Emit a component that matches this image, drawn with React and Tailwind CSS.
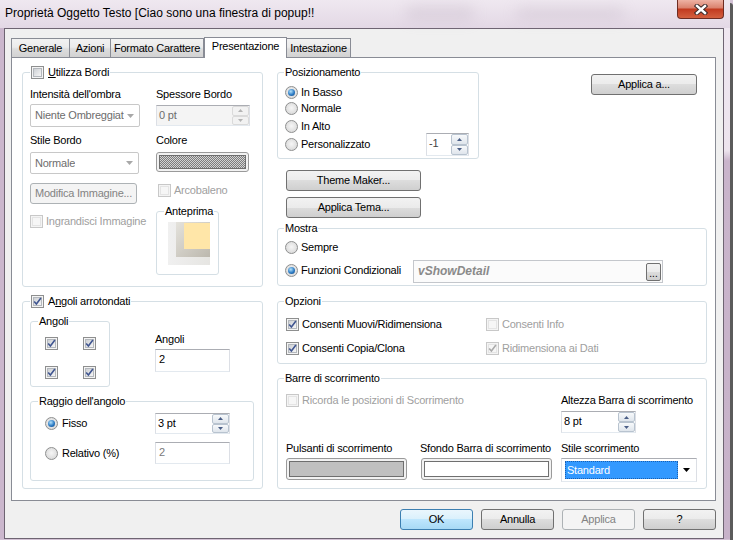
import React from 'react';

function Check({ checked = false, disabled = false }) {
  return (
    <span
      className={`relative flex h-[13px] w-[13px] shrink-0 items-center justify-center border ${
        disabled ? 'border-[#c8c8c8] bg-[#f4f4f4]' : 'border-[#8e8f8f] bg-[#f4f4f4]'
      }`}
    >
      <span
        className={`h-[9px] w-[9px] border ${
          disabled
            ? 'border-[#e4e4e4] bg-[#f6f6f6]'
            : 'border-[#b4b8bd] bg-[linear-gradient(135deg,#cdd0d4,#f6f6f6)]'
        }`}
      />
      {checked && (
        <svg className="absolute inset-0" width="11" height="11" viewBox="0 0 11 11">
          <path
            d="M2.2 5.4 L4.4 8 L8.9 2"
            fill="none"
            stroke={disabled ? '#aaaaaa' : '#3f5590'}
            strokeWidth="1.6"
          />
        </svg>
      )}
    </span>
  );
}

function Radio({ checked = false }) {
  return (
    <span className="flex h-[13px] w-[13px] shrink-0 items-center justify-center rounded-full border border-[#8e8f8f] bg-[radial-gradient(circle_at_50%_45%,#f6f6f6,#d2d2d2)]">
      {checked && (
        <span className="h-[7px] w-[7px] rounded-full bg-[radial-gradient(circle_at_40%_35%,#b4e2fb,#2c7bc4_55%,#13427a)]" />
      )}
    </span>
  );
}

function Button({ children, className = '', variant = 'normal' }) {
  const look =
    variant === 'primary'
      ? 'border-[#3c7fb1] bg-[linear-gradient(#eaf6fd,#d9f0fc_50%,#bee6fd_50%,#a7d9f5)]'
      : variant === 'disabled'
      ? 'border-[#adb2b5] bg-[#f4f4f4] text-[#838383]'
      : 'border-[#707070] bg-[linear-gradient(#f2f2f2,#ebebeb_50%,#dddddd_50%,#cfcfcf)]';
  return (
    <div className={`flex h-[21px] shrink-0 items-center justify-center rounded-[3px] border ${look} ${className}`}>
      {children}
    </div>
  );
}

function SpinButtons({ disabled = false }) {
  const c = disabled ? '#b4b4b4' : '#4a5e86';
  const part = disabled
    ? 'border-[#dadada] bg-[#f2f2f2]'
    : 'border-[#b8c3cf] bg-[linear-gradient(#f7f9fb,#dfe5ec)]';
  return (
    <div className="flex w-[17px] shrink-0 flex-col">
      <div className={`flex flex-1 items-center justify-center rounded-[2px] border ${part}`}>
        <svg width="5" height="3" viewBox="0 0 5 3">
          <path d="M0 3 L2.5 0 L5 3Z" fill={c} />
        </svg>
      </div>
      <div className={`flex flex-1 items-center justify-center rounded-[2px] border ${part}`}>
        <svg width="5" height="3" viewBox="0 0 5 3">
          <path d="M0 0 L5 0 L2.5 3Z" fill={c} />
        </svg>
      </div>
    </div>
  );
}

function SpinBox({ value, className = '', disabled = false }) {
  return (
    <div
      className={`flex shrink-0 border border-[#abadb3] border-x-[#dcdfe5] border-b-[#e3e9ef] ${
        disabled ? 'bg-[#f4f4f4] text-[#6d6d6d]' : 'bg-white'
      } ${className}`}
    >
      <span className="flex-1 pl-[2px] pt-[3px]">{value}</span>
      <SpinButtons disabled={disabled} />
    </div>
  );
}

function TextBox({ value, className = '', muted = false }) {
  return (
    <div
      className={`shrink-0 border border-[#abadb3] border-x-[#dcdfe5] border-b-[#e3e9ef] bg-white pl-[3px] pt-[3px] ${
        muted ? 'text-[#7a7a7a]' : ''
      } ${className}`}
    >
      {value}
    </div>
  );
}

function Combo({ value, className = '' }) {
  return (
    <div
      className={`flex shrink-0 items-center justify-between gap-[3px] rounded-[2px] border border-[#c8c8c8] bg-white pl-[4px] pr-[5px] text-[#6d6d6d] ${className}`}
    >
      <span className="overflow-hidden whitespace-nowrap">{value}</span>
      <svg className="shrink-0" width="7" height="4" viewBox="0 0 7 4">
        <path d="M0 0 L7 0 L3.5 4Z" fill="#a8a8a8" />
      </svg>
    </div>
  );
}

function Group({ legend, className = '', legendClass = 'ml-[6px]', children }) {
  return (
    <fieldset className={`shrink-0 rounded-[3px] border border-[#d5dfe5] ${className}`}>
      <legend className={`px-[1px] leading-[13px] ${legendClass}`}>{legend}</legend>
      {children}
    </fieldset>
  );
}

function Swatch({ className = '', fill }) {
  return (
    <div className={`shrink-0 rounded-[3px] border border-[#9a9a9a] bg-[#f2f2f2] p-[2px] ${className}`}>
      <div className={`h-full border border-[#6f6f6f] ${fill}`} />
    </div>
  );
}

function Labeled({ children, gray = false, gap = 'gap-[3px]' }) {
  return (
    <div className={`flex items-center ${gap} whitespace-nowrap ${gray ? 'text-[#a0a0a0]' : ''}`}>{children}</div>
  );
}

const tabs = [
  { label: 'Generale', w: 'w-[58px]', b: 'border-l border-t' },
  { label: 'Azioni', w: 'w-[41px]', b: 'border-l border-t' },
  { label: 'Formato Carattere', w: 'w-[94px]', b: 'border-x border-t' },
  { label: 'Presentazione', w: 'w-[83px]', active: true },
  { label: 'Intestazione', w: 'w-[64px]', b: 'border-r border-t' },
];

function CloseButton() {
  return (
    <div className="mr-[6px] flex h-[19px] w-[47px] shrink-0 items-center justify-center rounded-b-[4px] border border-t-0 border-[#6e2c22] bg-[linear-gradient(#eeb2a4,#db8470_42%,#c23b20_52%,#d4603f)]">
      <svg width="14" height="11" viewBox="0 0 14 11">
        <path d="M3 2 L11 9 M11 2 L3 9" stroke="#3b2a2a" strokeWidth="4.4" strokeLinecap="square" />
        <path d="M3 2 L11 9 M11 2 L3 9" stroke="#ffffff" strokeWidth="2.4" strokeLinecap="square" />
      </svg>
    </div>
  );
}

function LeftColumn() {
  return (
    <div className="flex w-[241px] shrink-0 flex-col">
      {/* Utilizza Bordi */}
      <Group
        className="h-[221px]"
        legendClass="ml-[7px]"
        legend={
          <span className="flex items-center gap-[4px]">
            <Check />
            <span>
              <span className="underline">U</span>tilizza Bordi
            </span>
          </span>
        }
      >
        <div className="flex gap-[16px] pl-[7px] pt-[9px]">
          <div className="flex w-[110px] flex-col">
            <div className="whitespace-nowrap">Intensità dell'ombra</div>
            <Combo value="Niente Ombreggiat" className="mt-[3px] h-[23px] w-[110px]" />
            <div className="mt-[7px]">Stile Bordo</div>
            <Combo value="Normale" className="mt-[5px] h-[22px] w-[109px]" />
            <Button variant="disabled" className="mt-[9px] h-[20px] w-[107px]">
              Modifica Immagine...
            </Button>
            <div className="mt-[11px]">
              <Labeled gray>
                <Check disabled />
                Ingrandisci Immagine
              </Labeled>
            </div>
          </div>
          <div className="flex w-[94px] flex-col">
            <div className="whitespace-nowrap">Spessore Bordo</div>
            <SpinBox value="0 pt" disabled className="mt-[4px] h-[21px] w-[94px]" />
            <div className="mt-[8px]">Colore</div>
            <Swatch
              className="mt-[5px] h-[20px] w-[93px]"
              fill="bg-[repeating-conic-gradient(#7d7d7d_0%_25%,#d4d4d4_0%_50%)] bg-size-[2px_2px]"
            />
            <div className="mt-[12px] pl-[2px]">
              <Labeled gray>
                <Check disabled />
                Arcobaleno
              </Labeled>
            </div>
            <Group className="mt-[8px] h-[70px] w-[63px]" legendClass="ml-[7px]" legend="Anteprima">
              <div className="pl-[11px] pt-[4px]">
                <div className="flex h-[43px] w-[42px] flex-col bg-[linear-gradient(90deg,#f0f0f0,#e6e5e2)]">
                  <div className="flex">
                    <div className="w-[8px]" />
                    <div className="flex h-[35px] w-[34px] items-start justify-end bg-[linear-gradient(135deg,#e4e2dc,#bcb8ae)] pt-[1px]">
                      <div className="h-[26px] w-[26px] bg-[#ffe6a8]" />
                    </div>
                  </div>
                </div>
              </div>
            </Group>
          </div>
        </div>
      </Group>

      {/* Angoli arrotondati */}
      <Group
        className="mt-[8px] h-[194px]"
        legendClass="ml-[7px]"
        legend={
          <span className="flex items-center gap-[4px]">
            <Check checked />
            <span>
              A<span className="underline">n</span>goli arrotondati
            </span>
          </span>
        }
      >
        <div className="flex pl-[7px] pt-[7px]">
          <Group className="h-[72px] w-[80px]" legendClass="ml-[7px]" legend="Angoli">
            <div className="grid w-max grid-cols-2 gap-x-[25px] gap-y-[16px] pl-[14px] pt-[9px]">
              <Check checked />
              <Check checked />
              <Check checked />
              <Check checked />
            </div>
          </Group>
          <div className="ml-[45px] flex flex-col pt-[18px]">
            <div>Angoli</div>
            <TextBox value="2" className="mt-[3px] h-[23px] w-[75px]" />
          </div>
        </div>
        <Group className="ml-[7px] mt-[8px] h-[86px] w-[224px]" legendClass="ml-[7px]" legend="Raggio dell'angolo">
          <div className="flex flex-col pl-[14px] pt-[5px]">
            <div className="flex h-[21px] items-center">
              <div className="w-[110px]">
                <Labeled gap="gap-[4px]">
                  <Radio checked />
                  Fisso
                </Labeled>
              </div>
              <SpinBox value="3 pt" className="h-[21px] w-[75px]" />
            </div>
            <div className="mt-[8px] flex h-[22px] items-center">
              <div className="w-[110px]">
                <Labeled gap="gap-[4px]">
                  <Radio />
                  Relativo (%)
                </Labeled>
              </div>
              <TextBox value="2" muted className="h-[22px] w-[75px]" />
            </div>
          </div>
        </Group>
      </Group>
    </div>
  );
}

function RightColumn() {
  return (
    <div className="ml-[14px] flex w-[430px] shrink-0 flex-col">
      <div className="flex items-start">
        <Group className="h-[93px] w-[202px]" legend="Posizionamento">
          <div className="flex flex-col pl-[7px] pr-[9px] pt-[7px]">
            <Labeled>
              <Radio checked />
              In Basso
            </Labeled>
            <div className="mt-[3px]">
              <Labeled>
                <Radio />
                Normale
              </Labeled>
            </div>
            <div className="mt-[5px]">
              <Labeled>
                <Radio />
                In Alto
              </Labeled>
            </div>
            <div className="mt-[5px] flex h-[13px] items-center justify-between">
              <Labeled>
                <Radio />
                Personalizzato
              </Labeled>
              <SpinBox value="-1" className="h-[23px] w-[43px] text-[#444]" />
            </div>
          </div>
        </Group>
        <Button className="ml-[112px] mt-[8px] w-[106px]">Applica a...</Button>
      </div>

      <Button className="ml-[9px] mt-[11px] w-[135px]">Theme Maker...</Button>
      <Button className="ml-[9px] mt-[6px] w-[135px]">Applica Tema...</Button>

      <Group className="mt-[4px] h-[64px]" legend="Mostra">
        <div className="flex flex-col pl-[7px] pt-[6px]">
          <Labeled>
            <Radio />
            Sempre
          </Labeled>
          <div className="mt-[6px] flex items-start">
            <div className="w-[128px] pt-[4px]">
              <Labeled>
                <Radio checked />
                Funzioni Condizionali
              </Labeled>
            </div>
            <div className="flex h-[23px] w-[250px] items-center justify-between border border-[#c4c7cc] bg-[#fbfbfb] pl-[4px] pr-[1px]">
              <span className="text-[12px] font-bold italic tracking-normal text-[#8a8a8a]">vShowDetail</span>
              <div className="flex h-[18px] w-[15px] items-end justify-center rounded-[2px] border border-[#707070] bg-[linear-gradient(#f2f2f2,#ebebeb_50%,#dddddd_50%,#cfcfcf)] pb-[1px] text-[10px] leading-[10px] tracking-normal">
                ...
              </div>
            </div>
          </div>
        </div>
      </Group>

      <Group className="mt-[9px] h-[69px]" legend="Opzioni">
        <div className="grid grid-cols-[200px_1fr] gap-y-[11px] pl-[8px] pt-[10px]">
          <Labeled>
            <Check checked />
            Consenti Muovi/Ridimensiona
          </Labeled>
          <Labeled gray>
            <Check disabled />
            Consenti Info
          </Labeled>
          <Labeled>
            <Check checked />
            Consenti Copia/Clona
          </Labeled>
          <Labeled gray>
            <Check checked disabled />
            Ridimensiona ai Dati
          </Labeled>
        </div>
      </Group>

      <Group className="mt-[8px] h-[117px]" legend="Barre di scorrimento">
        <div className="flex pl-[8px] pt-[9px]">
          <div className="w-[275px]">
            <Labeled gray>
              <Check disabled />
              Ricorda le posizioni di Scorrimento
            </Labeled>
          </div>
          <div className="flex flex-col">
            <div className="whitespace-nowrap">Altezza Barra di scorrimento</div>
            <SpinBox value="8 pt" className="mt-[4px] h-[22px] w-[75px]" />
          </div>
        </div>
        <div className="mt-[9px] grid grid-cols-[134px_141px_136px] pl-[8px]">
          <div className="flex flex-col">
            <div className="whitespace-nowrap">Pulsanti di scorrimento</div>
            <Swatch className="mt-[3px] h-[22px] w-[121px]" fill="bg-[#c0c0c0]" />
          </div>
          <div className="flex flex-col">
            <div className="whitespace-nowrap">Sfondo Barra di scorrimento</div>
            <Swatch className="ml-[1px] mt-[3px] h-[22px] w-[131px]" fill="bg-white" />
          </div>
          <div className="flex flex-col">
            <div className="whitespace-nowrap">Stile scorrimento</div>
            <div className="mt-[3px] flex h-[24px] w-[136px] items-center border border-[#abadb3] border-x-[#dcdfe5] border-b-[#e3e9ef] bg-white py-[2px] pl-[3px] pr-[6px]">
              <div className="flex h-[18px] w-[113px] items-center border border-dotted border-[#1a5fb0] bg-[#3399ff] pl-[1px] text-white">
                Standard
              </div>
              <div className="flex flex-1 justify-end">
                <svg width="7" height="4" viewBox="0 0 7 4">
                  <path d="M0 0 L7 0 L3.5 4Z" fill="#000" />
                </svg>
              </div>
            </div>
          </div>
        </div>
      </Group>
    </div>
  );
}

export default function App() {
  return (
    <div className="flex h-[540px] w-[733px] overflow-hidden bg-[#d3c2d5] font-['Liberation_Sans',Arial,sans-serif] text-[11px] leading-[13px] tracking-[-0.22px] text-black">
      <div className="flex w-[730px] shrink-0 flex-col">
        {/* title bar */}
        <div className="relative flex h-[28px] shrink-0 items-start justify-between bg-[linear-gradient(#efe8f0,#e3d8e5)]">
          <span className="absolute left-[405px] top-[5px] h-[16px] w-[70px] rounded-full bg-[#b6a8b8] opacity-25 blur-[7px]" />
          <span className="absolute left-[515px] top-[7px] h-[13px] w-[110px] rounded-full bg-[#b6a8b8] opacity-25 blur-[7px]" />
          <span className="relative whitespace-nowrap pl-[5px] pt-[6px] text-[12px] leading-[15px] tracking-normal">
            Proprietà Oggetto Testo [Ciao sono una finestra di popup!!
          </span>
          <CloseButton />
        </div>

        <div className="flex">
          <div className="w-[4px] shrink-0 bg-[#cbb7cd]" />
          <div className="flex h-[511px] w-[720px] shrink-0 flex-col border border-[#6e6472] bg-[#f0f0f0] pl-[6px] pt-[8px]">
            {/* tabs */}
            <div className="flex h-[20px] items-end">
              {tabs.map((t) =>
                t.active ? (
                  <div
                    key={t.label}
                    className={`relative z-10 -mb-[1px] flex h-[21px] ${t.w} shrink-0 justify-center border border-b-0 border-[#898c95] bg-white pt-[2px]`}
                  >
                    {t.label}
                  </div>
                ) : (
                  <div
                    key={t.label}
                    className={`flex h-[19px] ${t.w} shrink-0 items-center justify-center ${t.b} border-[#898c95] bg-[linear-gradient(#f2f2f2,#ebebeb_45%,#dddddd_55%,#d2d2d2)]`}
                  >
                    {t.label}
                  </div>
                )
              )}
            </div>

            {/* panel */}
            <div className="flex h-[444px] w-[705px] border border-[#898c95] bg-white pl-[10px] pt-[8px]">
              <LeftColumn />
              <RightColumn />
            </div>

            {/* dialog buttons */}
            <div className="mt-[8px] flex w-[705px] justify-end gap-[8px]">
              <Button variant="primary" className="w-[73px]">OK</Button>
              <Button className="w-[73px]">Annulla</Button>
              <Button variant="disabled" className="w-[73px]">Applica</Button>
              <Button className="w-[73px]">?</Button>
            </div>
          </div>
          <div className="w-[6px] shrink-0 bg-[linear-gradient(#efe7f0,#ece3ed_24%,#c9b4cb_26%,#c7b2c9)]" />
        </div>
      </div>
      <div className="mt-[3px] w-[3px] shrink-0 rounded-tr-[3px] bg-[#5b5b5b]" />
    </div>
  );
}
